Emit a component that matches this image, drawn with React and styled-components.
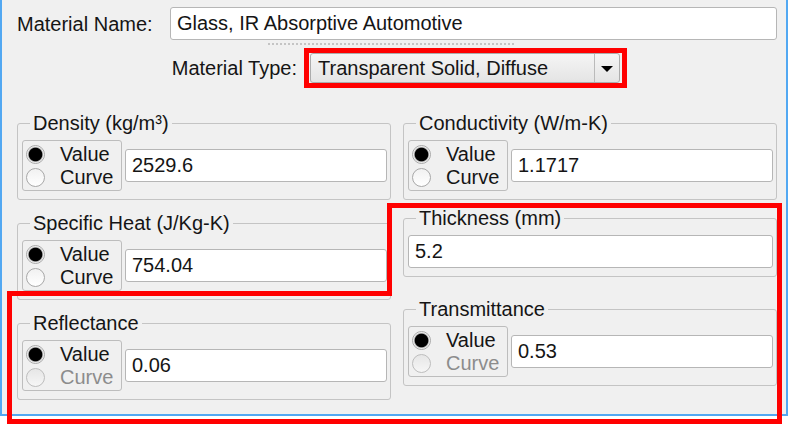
import React from 'react';
import styled, { createGlobalStyle } from 'styled-components';

const Global = createGlobalStyle`
  html, body { margin: 0; padding: 0; background: #fff; }
  body { font-family: "Liberation Sans", Arial, sans-serif; }
  * { box-sizing: border-box; }
`;

const Page = styled.div`
  position: relative;
  width: 790px;
  height: 426px;
  overflow: hidden;
`;

const Panel = styled.div`
  width: 788px;
  height: 416px;
  background: #f0f0f0;
  border: 2px solid #52a8f2;
  border-top: none;
  padding: 7px 9px 0 15px;
  font-size: 20px;
  color: #151515;
`;

const FieldRow = styled.div`
  display: flex;
  align-items: center;
  gap: ${p => p.$gap || 0}px;
  margin-top: ${p => p.$mt || 0}px;
`;

const FieldLabel = styled.label`
  flex: none;
  width: ${p => p.$w}px;
  text-align: ${p => p.$align || 'left'};
  line-height: 22px;
  white-space: nowrap;
`;

const TextInput = styled.input`
  flex: 1 1 0;
  width: 0;
  min-width: 0;
  height: 33px;
  margin: 0;
  padding: 0 6px;
  background: #fff;
  border: 1px solid #b6b6b6;
  border-radius: 3px;
  font: inherit;
  color: #151515;
  outline: none;
`;

const Grip = styled.div`
  margin: 3px 0 0 251px;
  width: 247px;
  height: 2px;
  background: repeating-linear-gradient(to right, #c4c4c4 0 2px, transparent 2px 4px);
`;

const Select = styled.div`
  flex: none;
  width: 310px;
  height: 30px;
  display: flex;
  border: 1px solid #acacac;
  border-radius: 3px;
  background: linear-gradient(#f5f5f5, #e4e4e4);
`;

const SelectText = styled.span`
  flex: 1;
  padding-left: 7px;
  line-height: 28px;
  white-space: nowrap;
`;

const SelectArrow = styled.span`
  width: 25px;
  border-left: 1px solid #bababa;
  display: flex;
  align-items: center;
  justify-content: center;
`;

const Caret = styled.span`
  width: 0;
  height: 0;
  border-left: 6px solid transparent;
  border-right: 6px solid transparent;
  border-top: 6px solid #000;
  margin-top: 1px;
`;

const Grid = styled.div`
  display: grid;
  grid-template-columns: repeat(2, minmax(0, 1fr));
  column-gap: 12px;
  align-items: start;
  margin-top: 40px;
`;

const Column = styled.div`
  display: flex;
  flex-direction: column;
  min-width: 0;
`;

const Group = styled.div`
  display: flex;
  flex-direction: column;
  margin-top: ${p => p.$mt || 0}px;
  padding: 0 3px 8px 4px;
  border: 1px solid #c4c4c4;
  border-radius: 3px;
`;

const Legend = styled.div`
  align-self: flex-start;
  margin: -12px 0 0 8px;
  padding: 0 3px;
  background: #f0f0f0;
  line-height: 22px;
  white-space: nowrap;
`;

const GroupBody = styled.div`
  display: flex;
  align-items: center;
  gap: 3px;
  margin-top: 6px;
`;

const RadioBox = styled.div`
  flex: none;
  width: 100px;
  height: 51px;
  padding: 2px 3px 1px;
  border: 1px solid #bdbdbd;
  border-radius: 3px;
  display: flex;
  flex-direction: column;
`;

const Option = styled.div`
  display: flex;
  align-items: center;
  height: 23px;
  line-height: 23px;
  color: ${p => (p.$disabled ? '#8c8c8c' : '#151515')};
`;

const RadioDot = styled.span`
  flex: none;
  width: 19px;
  height: 19px;
  margin-right: 15px;
  border-radius: 50%;
  border: 1px solid ${p => (p.$disabled ? '#bdbdbd' : '#a8a8a8')};
  background: ${p =>
    p.$checked
      ? 'radial-gradient(circle, #000 0, #000 6.3px, #bdbdbd 7.3px, #fff 8.3px)'
      : p.$disabled
      ? 'linear-gradient(#e6e6e6, #f6f6f6)'
      : 'linear-gradient(#f1f1f1, #fff)'};
`;

function Choice({ curveDisabled }) {
  return (
    <RadioBox>
      <Option>
        <RadioDot $checked />
        Value
      </Option>
      <Option $disabled={curveDisabled}>
        <RadioDot $disabled={curveDisabled} />
        Curve
      </Option>
    </RadioBox>
  );
}

function PropGroup({ title, value, radios = true, curveDisabled, mt }) {
  return (
    <Group $mt={mt}>
      <Legend>{title}</Legend>
      <GroupBody>
        {radios && <Choice curveDisabled={curveDisabled} />}
        <TextInput readOnly value={value} />
      </GroupBody>
    </Group>
  );
}

const Overlay = styled.svg`
  position: absolute;
  left: 0;
  top: 0;
  pointer-events: none;
`;

const leftGroups = [
  { title: 'Density (kg/m³)', value: '2529.6', mt: 0 },
  { title: 'Specific Heat (J/Kg-K)', value: '754.04', mt: 23 },
  { title: 'Reflectance', value: '0.06', mt: 23, curveDisabled: true },
];

const rightGroups = [
  { title: 'Conductivity (W/m-K)', value: '1.1717', mt: 0 },
  { title: 'Thickness (mm)', value: '5.2', mt: 18, radios: false },
  { title: 'Transmittance', value: '0.53', mt: 32, curveDisabled: true },
];

export default function App() {
  return (
    <Page>
      <Global />
      <Panel>
        <FieldRow>
          <FieldLabel $w={153}>Material Name:</FieldLabel>
          <TextInput readOnly value="Glass, IR Absorptive Automotive" />
        </FieldRow>
        <Grip />
        <FieldRow $mt={8} $gap={13}>
          <FieldLabel $w={280} $align="right">Material Type:</FieldLabel>
          <Select>
            <SelectText>Transparent Solid, Diffuse</SelectText>
            <SelectArrow>
              <Caret />
            </SelectArrow>
          </Select>
        </FieldRow>
        <Grid>
          <Column>
            {leftGroups.map(g => (
              <PropGroup key={g.title} {...g} />
            ))}
          </Column>
          <Column>
            {rightGroups.map(g => (
              <PropGroup key={g.title} {...g} />
            ))}
          </Column>
        </Grid>
      </Panel>
      <Overlay width="790" height="426" viewBox="0 0 790 426">
        <rect x="306.5" y="50.5" width="318" height="35" fill="none" stroke="#ff0000" strokeWidth="5" />
        <polygon
          points="389.5,205.5 779.5,205.5 779.5,421.5 9.5,421.5 9.5,293.5 389.5,293.5"
          fill="none"
          stroke="#ff0000"
          strokeWidth="5"
        />
      </Overlay>
    </Page>
  );
}
